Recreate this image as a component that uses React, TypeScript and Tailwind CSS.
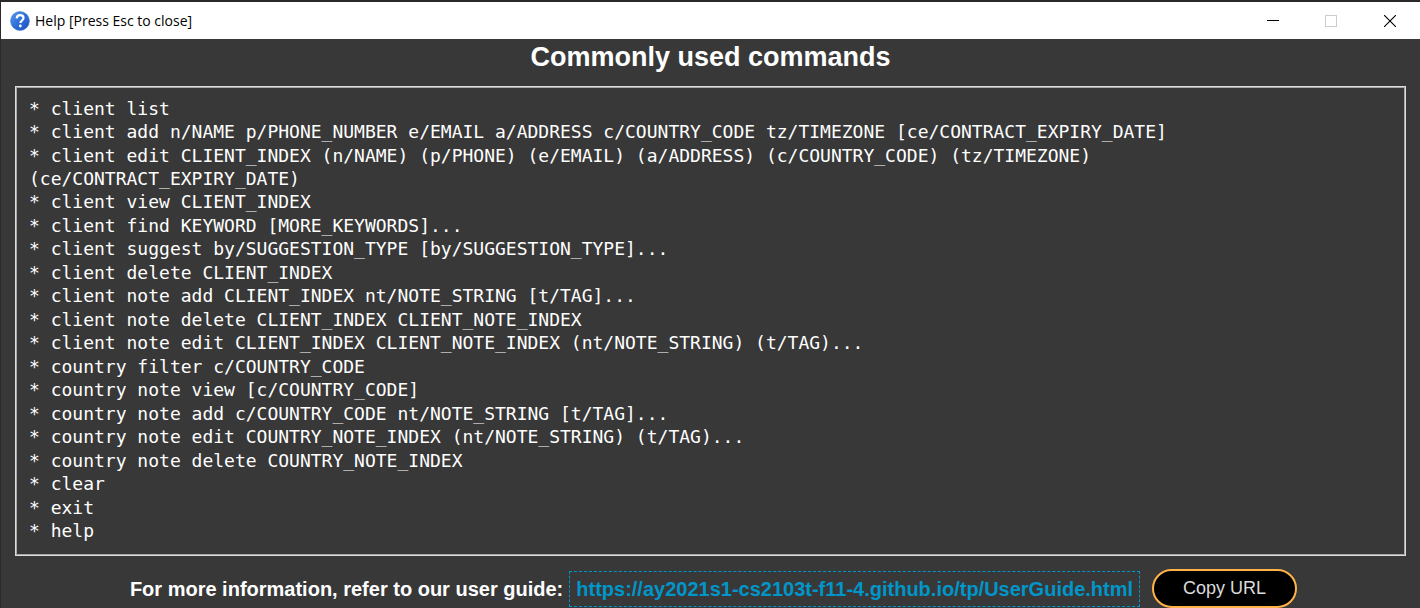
const COMMANDS: string[] = [
  "client list",
  "client add n/NAME p/PHONE_NUMBER e/EMAIL a/ADDRESS c/COUNTRY_CODE tz/TIMEZONE [ce/CONTRACT_EXPIRY_DATE]",
  "client edit CLIENT_INDEX (n/NAME) (p/PHONE) (e/EMAIL) (a/ADDRESS) (c/COUNTRY_CODE) (tz/TIMEZONE)\n(ce/CONTRACT_EXPIRY_DATE)",
  "client view CLIENT_INDEX",
  "client find KEYWORD [MORE_KEYWORDS]...",
  "client suggest by/SUGGESTION_TYPE [by/SUGGESTION_TYPE]...",
  "client delete CLIENT_INDEX",
  "client note add CLIENT_INDEX nt/NOTE_STRING [t/TAG]...",
  "client note delete CLIENT_INDEX CLIENT_NOTE_INDEX",
  "client note edit CLIENT_INDEX CLIENT_NOTE_INDEX (nt/NOTE_STRING) (t/TAG)...",
  "country filter c/COUNTRY_CODE",
  "country note view [c/COUNTRY_CODE]",
  "country note add c/COUNTRY_CODE nt/NOTE_STRING [t/TAG]...",
  "country note edit COUNTRY_NOTE_INDEX (nt/NOTE_STRING) (t/TAG)...",
  "country note delete COUNTRY_NOTE_INDEX",
  "clear",
  "exit",
  "help",
];

const GUIDE_URL = "https://ay2021s1-cs2103t-f11-4.github.io/tp/UserGuide.html";

function HelpIcon() {
  return (
    <svg viewBox="0 0 20 20" className="size-5" aria-hidden="true">
      <defs>
        <linearGradient id="ball" x1="0" y1="0" x2="1" y2="1">
          <stop offset="0" stopColor="#5b9be8" />
          <stop offset="0.5" stopColor="#2f6fd8" />
          <stop offset="1" stopColor="#1c4fc0" />
        </linearGradient>
      </defs>
      <circle cx="10" cy="10" r="9.4" fill="url(#ball)" stroke="#3f74cc" strokeWidth="0.6" />
      <path
        d="M6.700 7.400C6.900 5.200 8.200 4.200 10.100 4.200c2 0 3.400 1.100 3.400 2.800 0 2.400-3.100 2.600-3.100 5"
        fill="none"
        stroke="#fff"
        strokeWidth="2.200"
      />
      <circle cx="10.300" cy="15" r="1.400" fill="#fff" />
    </svg>
  );
}

function TitleBar() {
  return (
    <header className="flex h-[37px] items-center justify-between bg-white pl-[9px] text-black">
      <div className="flex items-center gap-[5px]">
        <HelpIcon />
        <span className="font-['Open_Sans',sans-serif] text-[14px] leading-5">Help [Press Esc to close]</span>
      </div>
      <div className="flex h-full">
        <button type="button" aria-label="Minimize" className="grid w-[58px] place-items-center">
          <svg viewBox="0 0 12 12" className="size-3" shapeRendering="crispEdges">
            <path d="M0 5.500h12" stroke="#000" />
          </svg>
        </button>
        <button type="button" aria-label="Maximize" disabled className="grid w-[58px] place-items-center">
          <svg viewBox="0 0 12 12" className="size-3" shapeRendering="crispEdges">
            <path d="M.5.5h11v11h-11z" fill="none" stroke="#ccc" />
          </svg>
        </button>
        <button type="button" aria-label="Close" className="grid w-[60px] place-items-center">
          <svg viewBox="0 0 12 12" className="size-3">
            <path d="M0 0l12 12M12 0L0 12" stroke="#000" strokeWidth="1.100" />
          </svg>
        </button>
      </div>
    </header>
  );
}

export default function App() {
  return (
    <div className="flex min-h-screen flex-col border-t-2 border-l border-[#2a2a2a] bg-[#383838] font-['Liberation_Sans',Arial,sans-serif] text-white">
      <TitleBar />
      <main className="flex grow flex-col px-[14px]">
        <h1 className="text-center text-[27px] leading-9 font-bold">Commonly used commands</h1>
        <section className="mt-[11px] flex grow flex-col border border-[#dcdcdc] pt-[10px] pr-3 pb-[13px] pl-[13px] inset-ring inset-ring-[#a8a8a8]">
          <ul className="flex grow flex-col justify-between font-['DejaVu_Sans_Mono',monospace] text-[18px] leading-[23px] whitespace-pre-line">
            {COMMANDS.map((command) => (
              <li key={command}>{`* ${command}`}</li>
            ))}
          </ul>
        </section>
        <footer className="mt-[13px] flex items-center justify-center pl-[6px] text-[20px]">
          <span className="mr-[6px] leading-6 font-bold">For more information, refer to our user guide:</span>
          <a
            href={GUIDE_URL}
            className="mr-3 border border-dashed border-[#0096c9] px-[6px] py-[5px] leading-6 font-bold text-[#0096c9]"
          >
            {GUIDE_URL}
          </a>
          <button
            type="button"
            className="rounded-full border-2 border-[#ffb347] bg-black px-[29px] py-[5px] text-[18px] leading-[25px] text-[#dcdcdc]"
          >
            Copy URL
          </button>
        </footer>
      </main>
    </div>
  );
}
